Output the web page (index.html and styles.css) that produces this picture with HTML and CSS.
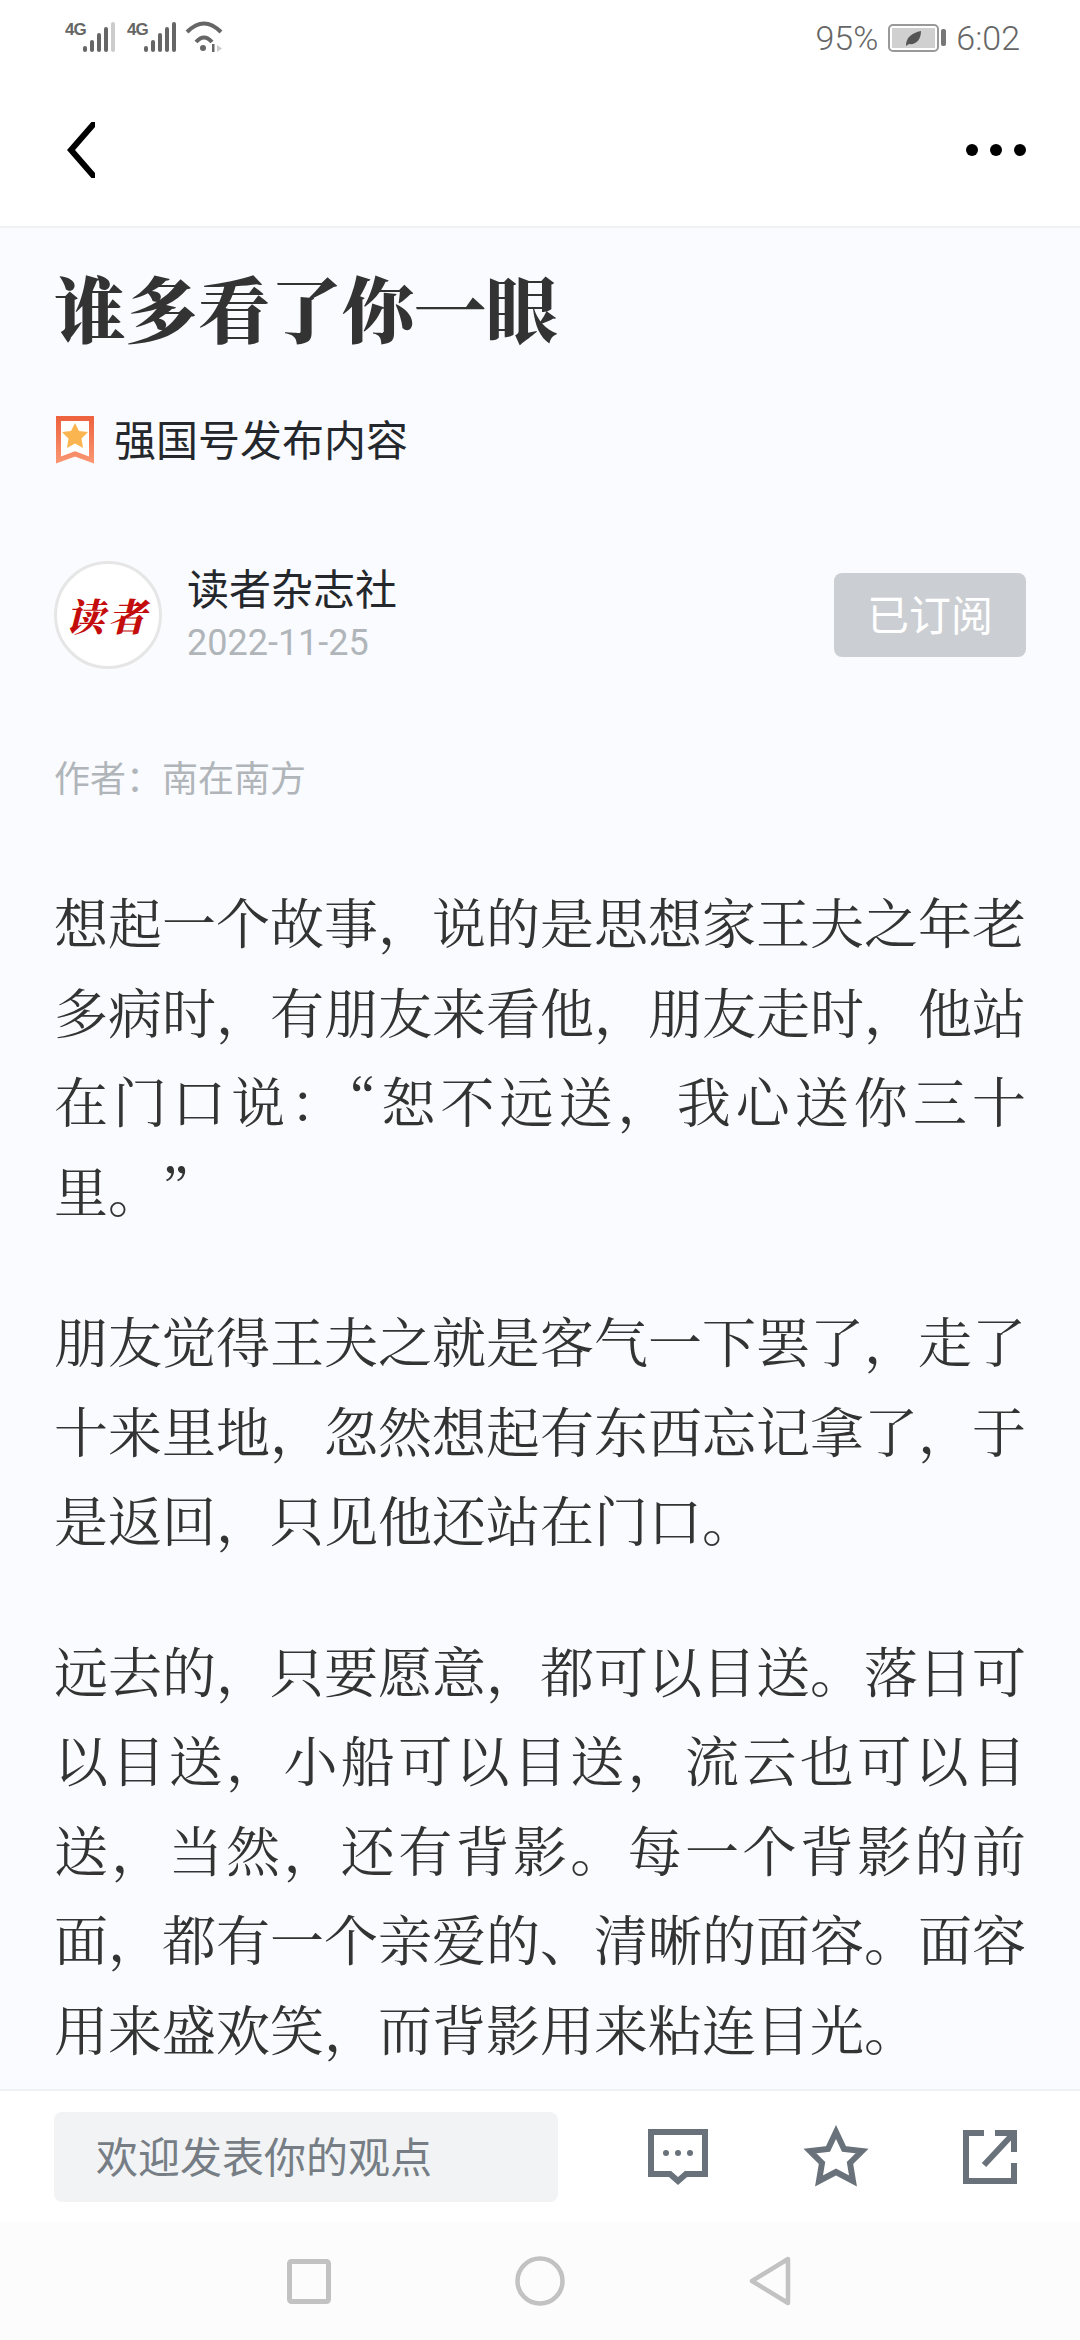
FILE: index.html
```html
<!DOCTYPE html>
<html lang="zh-CN">
<head>
  <meta charset="UTF-8" />
  <meta name="viewport" content="width=device-width, initial-scale=1" />
  <title>谁多看了你一眼</title>
  <link rel="stylesheet" href="styles.css">
</head>
<body>

  <div class="status-bar">
    <svg class="signal" width="160" height="34" viewBox="0 0 160 34">
      <g fill="#666">
        <text x="0" y="15" class="net-label">4G</text>
        <rect x="18" y="26" width="4" height="6" rx="2"/>
        <rect x="25" y="20" width="4" height="12" rx="2"/>
        <rect x="32" y="13" width="4" height="19" rx="2"/>
        <rect x="39" y="7" width="4" height="25" rx="2"/>
        <rect x="46" y="2" width="4" height="30" rx="2" fill="#ccc"/>
        <text x="62" y="15" class="net-label">4G</text>
        <rect x="79" y="26" width="4" height="6" rx="2"/>
        <rect x="86" y="20" width="4" height="12" rx="2"/>
        <rect x="93" y="13" width="4" height="19" rx="2"/>
        <rect x="100" y="7" width="4" height="25" rx="2"/>
        <rect x="107" y="2" width="4" height="30" rx="2"/>
        <path d="M122 12 Q139 -5 156 12" fill="none" stroke="#666" stroke-width="4"/>
        <path d="M131 22 Q139 13 147 22" fill="none" stroke="#666" stroke-width="4"/>
        <circle cx="138" cy="28" r="3"/>
        <rect x="147" y="24" width="2.5" height="8"/>
        <path d="M152 25 L157 28.5 L152 32 Z" fill="#ccc"/>
      </g>
    </svg>
    <div class="status-right">
      <span>95%</span>
      <svg width="58" height="28" viewBox="0 0 58 28">
        <rect x="1" y="1" width="49" height="26" rx="4" fill="none" stroke="#999" stroke-width="2"/>
        <rect x="4" y="4" width="43" height="20" fill="#d0d0d0"/>
        <path d="M18 22 C18 13 24 9 33 7 C33 17 27 21 21 20 Z" fill="#555"/>
        <rect x="53" y="5" width="5" height="17" rx="2" fill="#777"/>
      </svg>
      <span>6:02</span>
    </div>
  </div>

  <div class="top-nav">
    <svg width="28" height="56" viewBox="0 0 28 56">
      <path d="M31 -3 L4 28 L31 59" fill="none" stroke="#000" stroke-width="6"/>
    </svg>
    <div class="dots"><i></i><i></i><i></i></div>
  </div>

  <div class="article">
    <h1>谁多看了你一眼</h1>

    <div class="source">
      <svg width="38" height="48" viewBox="0 0 38 48">
        <defs>
          <linearGradient id="frame" x1="0" y1="0" x2="0" y2="1">
            <stop offset="0" stop-color="#ee6340"/>
            <stop offset="1" stop-color="#f8946e"/>
          </linearGradient>
        </defs>
        <path d="M2.5 2.5 H35.5 V44 L19 38 L2.5 44 Z" fill="#fff" stroke="url(#frame)" stroke-width="5"/>
        <path d="M19 7 L23 15 L32 16 L25.5 22.5 L27 32 L19 27.5 L11 32 L12.5 22.5 L6 16 L15 15 Z" fill="#fbb550"/>
      </svg>
      <span>强国号发布内容</span>
    </div>

    <div class="publisher">
      <div class="avatar">读者</div>
      <div class="pub-info">
        <div class="pub-name">读者杂志社</div>
        <div class="pub-date">2022-11-25</div>
      </div>
      <div class="sub-btn">已订阅</div>
    </div>

    <div class="author">作者：南在南方</div>

    <p>想起一个故事，说的是思想家王夫之年老多病时，有朋友来看他，朋友走时，他站在门口说：“恕不远送，我心送你三十<span class="no-trim">里。”</span></p>
    <p>朋友觉得王夫之就是客气一下罢了，走了十来里地，忽然想起有东西忘记拿了，于是返回，只见他还站在门口。</p>
    <p>远去的，只要愿意，都可以目送。落日可以目送，小船可以目送，流云也可以目送，当然，还有背影。每一个背影的前面，都有一个亲爱的、清晰的面容。面容用来盛欢笑，而背影用来粘连目光。</p>
  </div>

  <div class="bottom-bar">
    <div class="comment-input">欢迎发表你的观点</div>
    <div class="actions">
      <svg width="60" height="56" viewBox="0 0 60 56">
        <path d="M3 3 H57 V45 H38 L30 52 L22 45 H3 Z" fill="none" stroke="#69727a" stroke-width="6"/>
        <circle cx="18" cy="24" r="3" fill="#69727a"/>
        <circle cx="30" cy="24" r="3" fill="#69727a"/>
        <circle cx="42" cy="24" r="3" fill="#69727a"/>
      </svg>
      <svg width="66" height="64" viewBox="0 0 66 64">
        <path d="M33 7 L41 24 L59 26 L47 38 L50 56 L33 47 L16 56 L19 38 L7 26 L25 24 Z" fill="none" stroke="#69727a" stroke-width="6" stroke-miterlimit="10"/>
      </svg>
      <svg width="54" height="54" viewBox="0 0 54 54">
        <path d="M21 3 H3 V51 H51 V33" fill="none" stroke="#69727a" stroke-width="6"/>
        <path d="M32 3 H51 V22 M50 4 L21 35" fill="none" stroke="#69727a" stroke-width="6"/>
      </svg>
    </div>
  </div>

  <div class="nav-bar">
    <svg width="44" height="45" viewBox="0 0 44 45">
      <rect x="2.5" y="2.5" width="39" height="40" rx="2" fill="none" stroke="#c2c2c2" stroke-width="5"/>
    </svg>
    <svg width="50" height="50" viewBox="0 0 50 50">
      <circle cx="25" cy="25" r="22.5" fill="none" stroke="#c2c2c2" stroke-width="4.5"/>
    </svg>
    <svg width="42" height="50" viewBox="0 0 42 50">
      <path d="M39 3 V47 L3 25 Z" fill="none" stroke="#c2c2c2" stroke-width="4.5" stroke-linejoin="round"/>
    </svg>
  </div>

</body>
</html>
```

FILE: styles.css
```css
html, body {
  margin: 0;
  padding: 0;
}

body {
  width: 1080px;
  height: 2340px;
  overflow: hidden;
  display: flex;
  flex-direction: column;
  background: #fafbfe;
  font-family: "Noto Sans CJK SC", "Noto Sans", sans-serif;
}

.status-bar {
  height: 74px;
  background: #fff;
  display: flex;
  justify-content: space-between;
  padding: 20px 60px 0 65px;
  box-sizing: border-box;
}

.net-label {
  font-family: "Liberation Sans", sans-serif;
  font-size: 17px;
  font-weight: bold;
  letter-spacing: -1px;
}

.status-right {
  display: flex;
  align-items: center;
  align-self: flex-start;
  gap: 10px;
  margin-top: 2px;
  color: #666;
  font-family: Roboto, sans-serif;
  font-size: 34px;
  font-weight: 300;
  line-height: 32px;
}

.top-nav {
  height: 154px;
  background: #fff;
  border-bottom: 2px solid #f0f1f4;
  display: flex;
  justify-content: space-between;
  align-items: center;
  padding: 0 54px 0 67px;
  box-sizing: border-box;
}

.dots {
  display: flex;
  gap: 12px;
}

.dots i {
  width: 12px;
  height: 12px;
  border-radius: 50%;
  background: #000;
}

.article {
  flex: 1;
  min-height: 0;
  overflow: hidden;
  padding: 0 54px;
}

h1 {
  margin: 28px 0 0;
  font-family: "Noto Serif CJK SC", "Noto Sans CJK SC", serif;
  font-size: 72px;
  line-height: 100px;
  font-weight: 900;
  color: #333;
}

.source {
  display: flex;
  align-items: center;
  gap: 20px;
  margin: 60px 0 0 2px;
  font-size: 42px;
  line-height: 48px;
  color: #24282c;
}

.source span {
  margin-top: -5px;
}

.publisher {
  display: flex;
  align-items: center;
  margin-top: 96px;
}

.avatar {
  width: 108px;
  height: 108px;
  box-sizing: border-box;
  border: 3px solid #e6e6e6;
  border-radius: 50%;
  background: #fff;
  color: #c40c0c;
  font-family: "Noto Serif CJK SC", "Noto Sans CJK SC", serif;
  font-size: 38px;
  font-weight: 900;
  font-style: italic;
  letter-spacing: 4px;
  display: flex;
  align-items: center;
  justify-content: center;
  white-space: nowrap;
}

.pub-info {
  flex: 1;
  margin-left: 25px;
  padding-bottom: 3px;
}

.pub-name {
  font-size: 42px;
  line-height: 54px;
  color: #24282c;
}

.pub-date {
  margin-top: 6px;
  font-family: Roboto, sans-serif;
  font-size: 36px;
  line-height: 46px;
  color: #b0b5ba;
}

.sub-btn {
  width: 192px;
  height: 84px;
  padding-bottom: 5px;
  box-sizing: border-box;
  border-radius: 8px;
  background: #cbced2;
  color: #fff;
  font-size: 42px;
  display: flex;
  align-items: center;
  justify-content: center;
}

.author {
  margin-top: 83px;
  margin-bottom: 76px;
  font-size: 36px;
  line-height: 48px;
  color: #b0b5ba;
}

p {
  margin: 0 0 61px;
  font-family: "Noto Serif CJK SC", "Noto Sans CJK SC", serif;
  font-size: 54px;
  line-height: 89.5px;
  color: #333;
  text-align: justify;
}

.no-trim {
  text-spacing-trim: space-all;
}

.bottom-bar {
  height: 133px;
  background: #fff;
  border-top: 2px solid #f0f1f4;
  display: flex;
  align-items: center;
  padding: 0 63px 0 54px;
  box-sizing: border-box;
}

.comment-input {
  width: 504px;
  height: 90px;
  padding: 0 0 5px 42px;
  box-sizing: border-box;
  border-radius: 8px;
  background: #f1f3f5;
  color: #767d84;
  font-size: 42px;
  display: flex;
  align-items: center;
}

.actions {
  flex: 1;
  display: flex;
  justify-content: space-between;
  align-items: center;
  padding-left: 90px;
}

.nav-bar {
  height: 118px;
  background: #fcfcfd;
  display: flex;
  justify-content: center;
  align-items: center;
  gap: 184px;
  padding-right: 3px;
}
```
